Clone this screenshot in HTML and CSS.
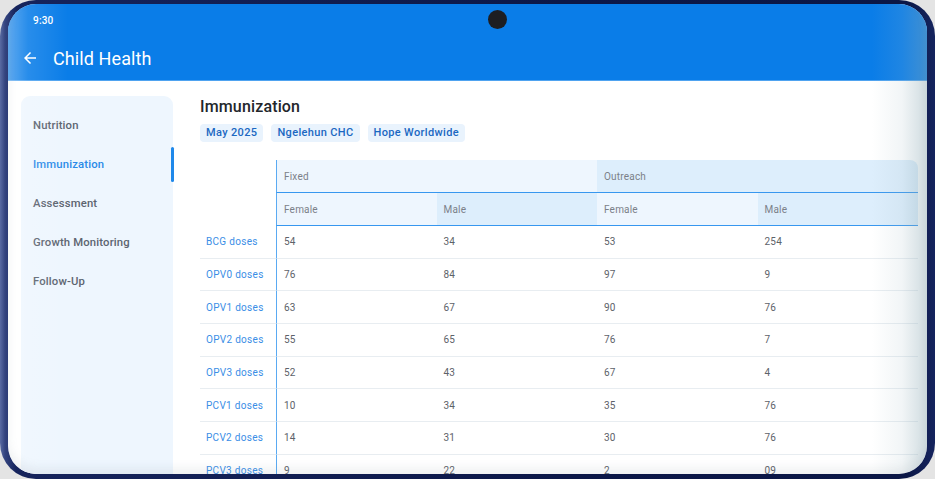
FILE: index.html
```html
<!DOCTYPE html>
<html lang="en">
<head>
<meta charset="utf-8">
<title>Child Health</title>
<link rel="stylesheet" href="styles.css">
</head>
<body>
<div class="device">
  <div class="screen">
    <div class="status-bar">
      <span class="time">9:30</span>
    </div>
    <div class="camera"></div>
    <header class="app-bar">
      <svg class="back" viewBox="0 0 24 24" width="18" height="18" aria-hidden="true"><path d="M20 11H7.83l5.59-5.59L12 4l-8 8 8 8 1.41-1.41L7.83 13H20v-2z" fill="#fff"/></svg>
      <h1 class="app-title">Child Health</h1>
    </header>
    <div class="content">
      <nav class="sidebar">
        <div class="nav-item">Nutrition</div>
        <div class="nav-item active">Immunization</div>
        <div class="nav-item">Assessment</div>
        <div class="nav-item">Growth Monitoring</div>
        <div class="nav-item">Follow-Up</div>
      </nav>
      <main class="main">
        <h2 class="page-title">Immunization</h2>
        <div class="chips">
          <span class="chip">May 2025</span>
          <span class="chip">Ngelehun CHC</span>
          <span class="chip">Hope Worldwide</span>
        </div>
        <table class="grid">
          <colgroup>
            <col class="col-label"><col><col><col><col>
          </colgroup>
          <thead>
            <tr class="group-row">
              <th class="blank"></th>
              <th colspan="2" class="light first">Fixed</th>
              <th colspan="2" class="dark last">Outreach</th>
            </tr>
            <tr class="sub-row">
              <th class="blank"></th>
              <th class="light first">Female</th>
              <th class="dark">Male</th>
              <th class="light">Female</th>
              <th class="dark">Male</th>
            </tr>
          </thead>
          <tbody>
            <tr><td class="label">BCG doses</td><td class="first">54</td><td>34</td><td>53</td><td>254</td></tr>
            <tr><td class="label">OPV0 doses</td><td class="first">76</td><td>84</td><td>97</td><td>9</td></tr>
            <tr><td class="label">OPV1 doses</td><td class="first">63</td><td>67</td><td>90</td><td>76</td></tr>
            <tr><td class="label">OPV2 doses</td><td class="first">55</td><td>65</td><td>76</td><td>7</td></tr>
            <tr><td class="label">OPV3 doses</td><td class="first">52</td><td>43</td><td>67</td><td>4</td></tr>
            <tr><td class="label">PCV1 doses</td><td class="first">10</td><td>34</td><td>35</td><td>76</td></tr>
            <tr><td class="label">PCV2 doses</td><td class="first">14</td><td>31</td><td>30</td><td>76</td></tr>
            <tr><td class="label">PCV3 doses</td><td class="first">9</td><td>22</td><td>2</td><td>09</td></tr>
          </tbody>
        </table>
      </main>
    </div>
    <div class="glare"></div>
  </div>
</div>
</body>
</html>
```

FILE: styles.css
```css
* { box-sizing: border-box; }

html, body {
  margin: 0;
  padding: 0;
  background: #e4e4e4;
  font-family: Roboto, "Noto Sans", "Liberation Sans", sans-serif;
}

.device {
  width: 935px;
  height: 479px;
  padding: 4px 8px 5px 8px;
  border-radius: 36px;
  background: linear-gradient(to right, #5a6ba3 0, #34447f 5px, #16245c 16px, #0c1848 60%, #0b1746 97%, #15245e 100%);
  overflow: hidden;
}

.screen {
  position: relative;
  height: 100%;
  border-radius: 28px;
  overflow: hidden;
  background: #fff;
  display: flex;
  flex-direction: column;
}

.status-bar {
  height: 32px;
  flex: none;
  background: #0a7de8;
  display: flex;
  align-items: center;
  padding-left: 25px;
}

.time {
  color: #fff;
  font-size: 10px;
  font-weight: 500;
  letter-spacing: 0.2px;
}

.camera {
  position: absolute;
  left: 480px;
  top: 6px;
  width: 19px;
  height: 19px;
  border-radius: 50%;
  background: #1d1e22;
}

.app-bar {
  height: 45px;
  flex: none;
  background: #0a7de8;
  display: flex;
  align-items: center;
  padding-left: 13px;
  border-bottom: 1px solid #4fa3f0;
}

.back {
  display: block;
  flex: none;
}

.app-title {
  margin: 0 0 0 14px;
  color: #fff;
  font-size: 18px;
  font-weight: 400;
  letter-spacing: 0.1px;
}

.content {
  flex: 1;
  display: flex;
  padding: 15px 9px 0 13px;
  min-height: 0;
}

.sidebar {
  width: 152px;
  flex: none;
  background: #eef6fe;
  border-radius: 9px 9px 0 0;
  padding-top: 10px;
}

.nav-item {
  position: relative;
  height: 39px;
  display: flex;
  align-items: center;
  padding-left: 12px;
  font-size: 11.3px;
  font-weight: 500;
  color: #5c6470;
  letter-spacing: 0.15px;
}

.nav-item.active {
  color: #2a8ae8;
}

.nav-item.active::after {
  content: "";
  position: absolute;
  right: -1px;
  top: 2px;
  bottom: 2px;
  width: 3px;
  border-radius: 2px;
  background: #1f88ea;
}

.main {
  flex: 1;
  margin-left: 27px;
  min-width: 0;
}

.page-title {
  margin: 0;
  height: 22px;
  line-height: 22px;
  font-size: 16px;
  font-weight: 500;
  color: #23262b;
  letter-spacing: 0.15px;
}

.chips {
  display: flex;
  gap: 8px;
  margin-top: 6px;
}

.chip {
  background: #e9f3fd;
  color: #1b68c2;
  font-size: 11px;
  font-weight: 500;
  line-height: 14px;
  padding: 2px 6px;
  border-radius: 4px;
  letter-spacing: 0.35px;
}

.grid {
  margin-top: 18px;
  width: 100%;
  table-layout: fixed;
  border-collapse: separate;
  border-spacing: 0;
  font-size: 10px;
}

.col-label { width: 76px; }

.grid th {
  text-align: left;
  font-weight: 400;
  color: #7b8088;
  padding: 0 0 0 7px;
  vertical-align: middle;
  letter-spacing: 0.2px;
}

.group-row th { height: 33px; }
.sub-row th { height: 33px; }

.grid th.light { background: #eef6fe; }
.grid th.dark { background: #ddeefc; }
.grid th.light, .grid th.dark { border-bottom: 1px solid #3797ef; }
.grid th.blank { background: transparent; border: none; }
.grid th.last { border-top-right-radius: 8px; }

.grid .first { border-left: 1px solid #5aaaf2; }

.grid td {
  height: 32.7px;
  padding: 0 0 0 7px;
  color: #5d6269;
  border-bottom: 1px solid #e8edf1;
  vertical-align: middle;
  letter-spacing: 0.2px;
}

.grid td.label {
  padding-left: 6px;
  color: #3a8ee6;
  letter-spacing: 0.3px;
}

.glare {
  position: absolute;
  inset: 0;
  pointer-events: none;
  border-radius: 28px;
  background: linear-gradient(to right, rgba(255,255,255,0.35) 0, rgba(255,255,255,0.12) 20px, rgba(255,255,255,0) 60px, rgba(255,255,255,0) calc(100% - 55px), rgba(160,185,195,0.14) calc(100% - 25px), rgba(140,170,180,0.42) 100%);
  box-shadow: inset 0 -6px 10px rgba(120,140,150,0.12);
}
```
